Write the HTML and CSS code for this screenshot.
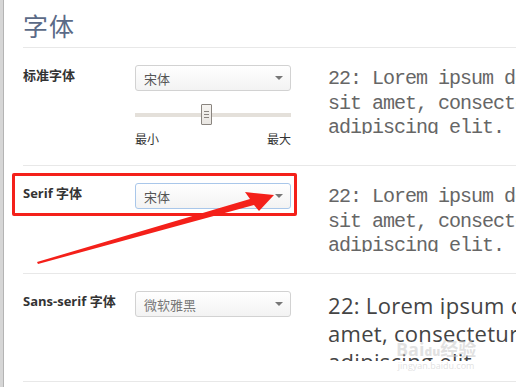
FILE: index.html
```html
<!DOCTYPE html>
<html lang="zh">
<head>
<meta charset="utf-8">
<link rel="stylesheet" href="styles.css">
</head>
<body>
<div class="frame">
  <div class="edge"></div>
  <main class="page">
    <h1 class="title">字体</h1>

    <section class="row row-first">
      <div class="label">标准字体</div>
      <div class="control">
        <div class="select"><span>宋体</span><i class="caret"></i></div>
        <div class="slider">
          <div class="track"></div>
          <div class="thumb"><i></i><i></i><i></i></div>
        </div>
        <div class="range-labels"><span>最小</span><span>最大</span></div>
      </div>
      <div class="preview mono">22: Lorem ipsum dolor<br>sit amet, consectetur<br>adipiscing elit.</div>
    </section>

    <section class="row">
      <div class="label">Serif 字体</div>
      <div class="control">
        <div class="select focused"><span>宋体</span><i class="caret"></i></div>
      </div>
      <div class="preview mono">22: Lorem ipsum dolor<br>sit amet, consectetur<br>adipiscing elit.</div>
    </section>

    <section class="row">
      <div class="label">Sans-serif 字体</div>
      <div class="control">
        <div class="select"><span class="light">微软雅黑</span><i class="caret"></i></div>
      </div>
      <div class="preview sans">22: Lorem ipsum dolor sit<br>amet, consectetur<br>adipiscing elit.</div>
    </section>
  </main>

  <div class="highlight"></div>
  <svg class="arrow" width="516" height="387" viewBox="0 0 516 387">
    <polygon points="37,262 250,199 245,192 274,195 259,211 254,205 38,264" fill="#f4201a"/>
  </svg>
  <div class="watermark"><span class="wm-big">Bai<b>du</b>经验</span><span class="wm-small">jingyan.baidu.com</span></div>
</div>
</body>
</html>
```
FILE: styles.css
```css
html, body {
  margin: 0;
  padding: 0;
  background: #fff;
  overflow: hidden;
}
body {
  width: 516px;
  height: 387px;
  font-family: "Open Sans", "Noto Sans CJK SC", sans-serif;
  color: #333;
}
.frame {
  position: relative;
  display: flex;
  width: 516px;
  height: 387px;
  overflow: hidden;
}
.edge {
  width: 3px;
  flex: none;
  background: #d6d6d6;
  border-right: 1px solid #b4b4b4;
}
.page {
  flex: 1;
  padding-left: 19px;
  min-width: 0;
}
.title {
  margin: 0;
  height: 48px;
  box-sizing: border-box;
  padding-top: 9px;
  font-family: "Noto Sans CJK SC", sans-serif;
  font-weight: 400;
  font-size: 25px;
  line-height: 32px;
  color: #5b6a87;
  border-bottom: 1px solid #e8e8e8;
  letter-spacing: 1px;
}
.row {
  display: grid;
  grid-template-columns: 112px 156px 300px;
  column-gap: 0;
  align-items: start;
  height: 108px;
  box-sizing: border-box;
  padding-top: 17px;
  border-bottom: 1px solid #e8e8e8;
}
.row-first {
  height: 118px;
}
.label {
  font-family: "Open Sans", "Noto Sans CJK SC", sans-serif;
  font-weight: 700;
  font-size: 13px;
  line-height: 18px;
  padding-top: 1px;
  color: #333;
  white-space: nowrap;
}
.select {
  height: 26px;
  box-sizing: border-box;
  border: 1px solid #d2d2d2;
  border-radius: 3px;
  background: linear-gradient(#ffffff, #f3f3f3);
  display: flex;
  align-items: center;
  justify-content: space-between;
  padding: 0 7px 0 8px;
  font-family: "Noto Sans CJK SC", sans-serif;
  font-size: 13px;
  color: #555;
}
.select.focused {
  border-color: #a9c7ea;
}
.select .light {
  color: #777;
}
.caret {
  width: 0;
  height: 0;
  border-left: 4px solid transparent;
  border-right: 4px solid transparent;
  border-top: 4px solid #777;
}
.slider {
  position: relative;
  height: 21px;
  margin-top: 13px;
  display: flex;
  align-items: center;
}
.track {
  width: 100%;
  height: 4px;
  background: #e4e0da;
}
.thumb {
  position: absolute;
  left: 66px;
  top: 0;
  width: 9px;
  height: 19px;
  border: 1px solid #8a8580;
  background: linear-gradient(#f6f4f1, #e9e6e2);
  border-radius: 1px;
  display: flex;
  flex-direction: column;
  align-items: center;
  justify-content: center;
  gap: 2px;
}
.thumb i {
  display: block;
  width: 5px;
  height: 1px;
  background: #8a8580;
}
.range-labels {
  display: flex;
  justify-content: space-between;
  margin-top: 6px;
  font-family: "Noto Sans CJK SC", sans-serif;
  font-size: 12px;
  line-height: 16px;
  color: #333;
}
.preview {
  overflow: hidden;
  white-space: nowrap;
  color: #555;
  margin-left: 37px;
}
.mono {
  font-family: "Liberation Mono", monospace;
  font-size: 20px;
  letter-spacing: -1px;
  line-height: 24.5px;
  height: 67px;
  padding-top: 2px;
  color: #666;
}
.sans {
  font-family: "Open Sans", sans-serif;
  font-size: 22px;
  letter-spacing: 0.3px;
  line-height: 28px;
  height: 70px;
  color: #444;
}
.highlight {
  position: absolute;
  left: 12px;
  top: 173px;
  width: 285px;
  height: 43px;
  box-sizing: border-box;
  border: 3px solid #f4201a;
  border-radius: 2px;
}
.arrow {
  position: absolute;
  left: 0;
  top: 0;
}
.watermark {
  position: absolute;
  left: 396px;
  top: 340px;
  display: flex;
  flex-direction: column;
  align-items: center;
  color: rgba(200, 200, 200, 0.55);
  font-family: "Open Sans", "Noto Sans CJK SC", sans-serif;
  line-height: 1;
}
.wm-big {
  font-size: 18px;
  font-weight: 700;
}
.wm-big b {
  font-size: 12px;
}
.wm-small {
  font-size: 9px;
  margin-top: 3px;
}
```
